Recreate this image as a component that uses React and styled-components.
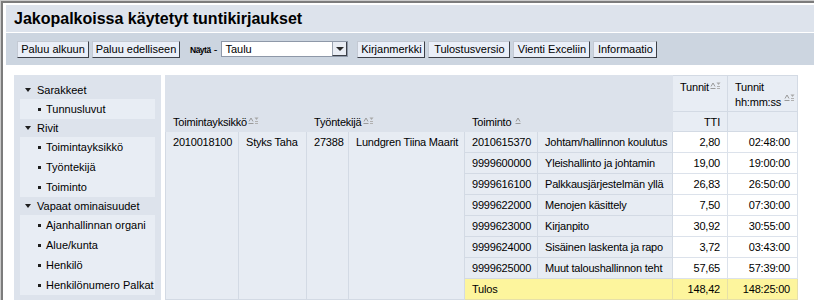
import React from "react";
import styled, { createGlobalStyle } from "styled-components";

const GlobalStyle = createGlobalStyle`
  html, body {
    margin: 0;
    padding: 0;
    background: #cacaca;
  }
  body {
    font-family: "Liberation Sans", Arial, sans-serif;
    font-size: 11px;
    color: #000;
  }
`;

const Frame = styled.div`
  width: 814px;
  height: 300px;
  box-sizing: border-box;
  padding: 1px 0 0 1px;
  overflow: hidden;
  background: #cacaca;
`;

const Window = styled.div`
  height: 100%;
  box-sizing: border-box;
  border-top: 2px solid #7c7c7c;
  border-left: 2px solid #7c7c7c;
  padding: 2px 0 0 3px;
  background: #fff;
  display: flex;
  flex-direction: column;
`;

const TitleBar = styled.h1`
  margin: 0 0 1px;
  height: 27px;
  line-height: 27px;
  padding-left: 8px;
  background: #dde3ec;
  font-size: 16px;
  font-weight: bold;
  color: #000;
`;

const Toolbar = styled.div`
  height: 32px;
  padding-left: 11px;
  background: #ccd5e0;
  display: flex;
  align-items: center;
  gap: 3px;
`;

const Button = styled.button`
  width: ${(p) => p.$w}px;
  height: 17px;
  box-sizing: border-box;
  padding: 0;
  margin-left: ${(p) => p.$ml || 0}px;
  background: #eaeff8;
  border: 1px solid;
  border-color: #c4cad4 #3c4048 #3c4048 #c4cad4;
  font-family: "Liberation Sans", Arial, sans-serif;
  font-size: 11px;
  color: #000;
  white-space: nowrap;
`;

const ShowLabel = styled.span`
  margin-left: 7px;
  font-size: 11px;
  white-space: nowrap;

  b {
    font-size: 8.5px;
    letter-spacing: -0.5px;
  }
`;

const Select = styled.div`
  width: 127px;
  height: 16px;
  box-sizing: border-box;
  margin-left: 1px;
  border: 1px solid #8e98a8;
  background: #fff;
  display: flex;
`;

const SelectValue = styled.span`
  flex: 1;
  padding-left: 3px;
  line-height: 14px;
  font-size: 11px;
`;

const SelectArrow = styled.span`
  width: 15px;
  box-sizing: border-box;
  background: #e9edf4;
  border-left: 1px solid #9aa3b0;
  border-right: 1px solid #3c4048;
  border-bottom: 1px solid #3c4048;
  display: flex;
  align-items: center;
  justify-content: center;

  &::after {
    content: "";
    border-left: 4px solid transparent;
    border-right: 4px solid transparent;
    border-top: 4px solid #2a2a2a;
  }
`;

const Content = styled.div`
  flex: 1;
  display: flex;
  gap: 4px;
  padding: 10px 0 0 8px;
  min-height: 0;
`;

const Panel = styled.div`
  width: 147px;
  box-sizing: border-box;
  padding: 6px 6px;
  background: #dde3ec;
  flex-shrink: 0;
`;

const GroupHead = styled.div`
  height: 18px;
  display: flex;
  align-items: center;
  gap: 6px;
  padding-left: 5px;
  font-size: 11px;

  &::before {
    content: "";
    border-left: 3.5px solid transparent;
    border-right: 3.5px solid transparent;
    border-top: 4px solid #1e1e1e;
  }
`;

const GroupItems = styled.div`
  background: #e8edf4;
`;

const Item = styled.div`
  height: 20px;
  display: flex;
  align-items: center;
  gap: 5px;
  padding-left: 18px;
  font-size: 11px;
  white-space: nowrap;

  &::before {
    content: "";
    width: 3px;
    height: 3px;
    background: #1e1e1e;
  }
`;

const Table = styled.table`
  width: 633px;
  table-layout: fixed;
  border-collapse: collapse;
  align-self: flex-start;
  font-size: 11px;
  letter-spacing: -0.2px;
  white-space: nowrap;
`;

const Row = styled.tr`
  height: ${(p) => p.$h}px;
`;

const DimHead = styled.th`
  padding: 0 7px;
  background: #dce2eb;
  border: 1px solid #dce2eb;
  text-align: left;
  font-weight: normal;
  vertical-align: middle;
`;

const MeasureHead = styled.th`
  padding: ${(p) => (p.$top ? "4px 7px 0" : "0 7px")};
  background: #e8edf4;
  border: 1px solid #d3dae4;
  text-align: ${(p) => (p.$right ? "right" : "left")};
  vertical-align: ${(p) => (p.$top ? "top" : "middle")};
  font-weight: normal;
  line-height: 14px;
`;

const DimCell = styled.td`
  padding: 0 7px;
  background: #e7ecf3;
  border: 1px solid #d3dae4;
  vertical-align: ${(p) => (p.$top ? "top" : "middle")};
  line-height: ${(p) => (p.$top ? "21px" : "normal")};
  overflow: hidden;
`;

const ValueCell = styled.td`
  padding: 0 7px;
  background: #fff;
  border: 1px solid #dce2eb;
  text-align: right;
`;

const ResultCell = styled.td`
  padding: 0 7px;
  background: #fdf59d;
  border: 1px solid #e6e0a8;
  text-align: ${(p) => (p.$right ? "right" : "left")};
`;

const IconWrap = styled.svg`
  margin-left: ${(p) => p.$ml}px;
  vertical-align: ${(p) => (p.$raised ? "5px" : "2px")};
`;

const SortIcon = ({ filter, raised, ml = 1 }) => (
  <IconWrap
    width={filter ? 11 : 6}
    height="7"
    viewBox={filter ? "0 0 11 7" : "0 0 6 7"}
    $ml={ml}
    $raised={raised}
  >
    <path d="M1 4.5 L3 1 L5 4.5" fill="none" stroke="#9a9a9a" strokeWidth="1" />
    <path d="M0.5 6.5 H5.5" stroke="#9a9a9a" strokeWidth="1" />
    {filter && (
      <>
        <path d="M6.5 0.5 H10.5 L8.5 3 Z" fill="#a8a8a8" />
        <path d="M7 4.5 H10 M7 6.5 H10" stroke="#b0b0b0" strokeWidth="1" />
      </>
    )}
  </IconWrap>
);

const rows = [
  ["2010615370", "Johtam/hallinnon koulutus", "2,80", "02:48:00"],
  ["9999600000", "Yleishallinto ja johtamin", "19,00", "19:00:00"],
  ["9999616100", "Palkkausjärjestelmän yllä", "26,83", "26:50:00"],
  ["9999622000", "Menojen käsittely", "7,50", "07:30:00"],
  ["9999623000", "Kirjanpito", "30,92", "30:55:00"],
  ["9999624000", "Sisäinen laskenta ja rapo", "3,72", "03:43:00"],
  ["9999625000", "Muut taloushallinnon teht", "57,65", "57:39:00"],
];

const groups = [
  { title: "Sarakkeet", items: ["Tunnusluvut"] },
  { title: "Rivit", items: ["Toimintayksikkö", "Työntekijä", "Toiminto"] },
  {
    title: "Vapaat ominaisuudet",
    items: ["Ajanhallinnan organi", "Alue/kunta", "Henkilö", "Henkilönumero Palkat"],
  },
];

const widths = [73, 68, 42, 116, 73, 135, 55, 70];

const App = () => {
  return (
    <Frame>
      <GlobalStyle />
      <Window>
        <TitleBar>Jakopalkoissa käytetyt tuntikirjaukset</TitleBar>
        <Toolbar>
          <Button $w={72}>Paluu alkuun</Button>
          <Button $w={88}>Paluu edelliseen</Button>
          <ShowLabel>
            <b>Näytä</b> -
          </ShowLabel>
          <Select>
            <SelectValue>Taulu</SelectValue>
            <SelectArrow />
          </Select>
          <Button $w={68} $ml={6}>
            Kirjanmerkki
          </Button>
          <Button $w={82}>Tulostusversio</Button>
          <Button $w={77}>Vienti Exceliin</Button>
          <Button $w={64}>Informaatio</Button>
        </Toolbar>
        <Content>
          <Panel>
            {groups.map((g) => (
              <div key={g.title}>
                <GroupHead>{g.title}</GroupHead>
                <GroupItems>
                  {g.items.map((it) => (
                    <Item key={it}>{it}</Item>
                  ))}
                </GroupItems>
              </div>
            ))}
          </Panel>
          <Table>
            <colgroup>
              {widths.map((w, i) => (
                <col key={i} style={{ width: w }} />
              ))}
            </colgroup>
            <thead>
              <Row $h={36}>
                <DimHead colSpan={6} />
                <MeasureHead $top>
                  Tunnit
                  <SortIcon filter />
                </MeasureHead>
                <MeasureHead $top>
                  Tunnit
                  <br />
                  hh:mm:ss
                  <SortIcon filter raised ml={3} />
                </MeasureHead>
              </Row>
              <Row $h={20}>
                <DimHead colSpan={2}>
                  Toimintayksikkö
                  <SortIcon filter />
                </DimHead>
                <DimHead colSpan={2}>
                  Työntekijä
                  <SortIcon filter />
                </DimHead>
                <DimHead colSpan={2}>
                  Toiminto
                  <SortIcon ml={4} />
                </DimHead>
                <MeasureHead $right>TTI</MeasureHead>
                <MeasureHead />
              </Row>
            </thead>
            <tbody>
              {rows.map((r, i) => (
                <Row $h={21} key={r[0]}>
                  {i === 0 && (
                    <>
                      <DimCell $top rowSpan={8}>2010018100</DimCell>
                      <DimCell $top rowSpan={8}>Styks Taha</DimCell>
                      <DimCell $top rowSpan={8}>27388</DimCell>
                      <DimCell $top rowSpan={8}>Lundgren Tiina Maarit</DimCell>
                    </>
                  )}
                  <DimCell>{r[0]}</DimCell>
                  <DimCell>{r[1]}</DimCell>
                  <ValueCell>{r[2]}</ValueCell>
                  <ValueCell>{r[3]}</ValueCell>
                </Row>
              ))}
              <Row $h={21}>
                <ResultCell colSpan={2}>Tulos</ResultCell>
                <ResultCell $right>148,42</ResultCell>
                <ResultCell $right>148:25:00</ResultCell>
              </Row>
            </tbody>
          </Table>
        </Content>
      </Window>
    </Frame>
  );
};

export default App;
